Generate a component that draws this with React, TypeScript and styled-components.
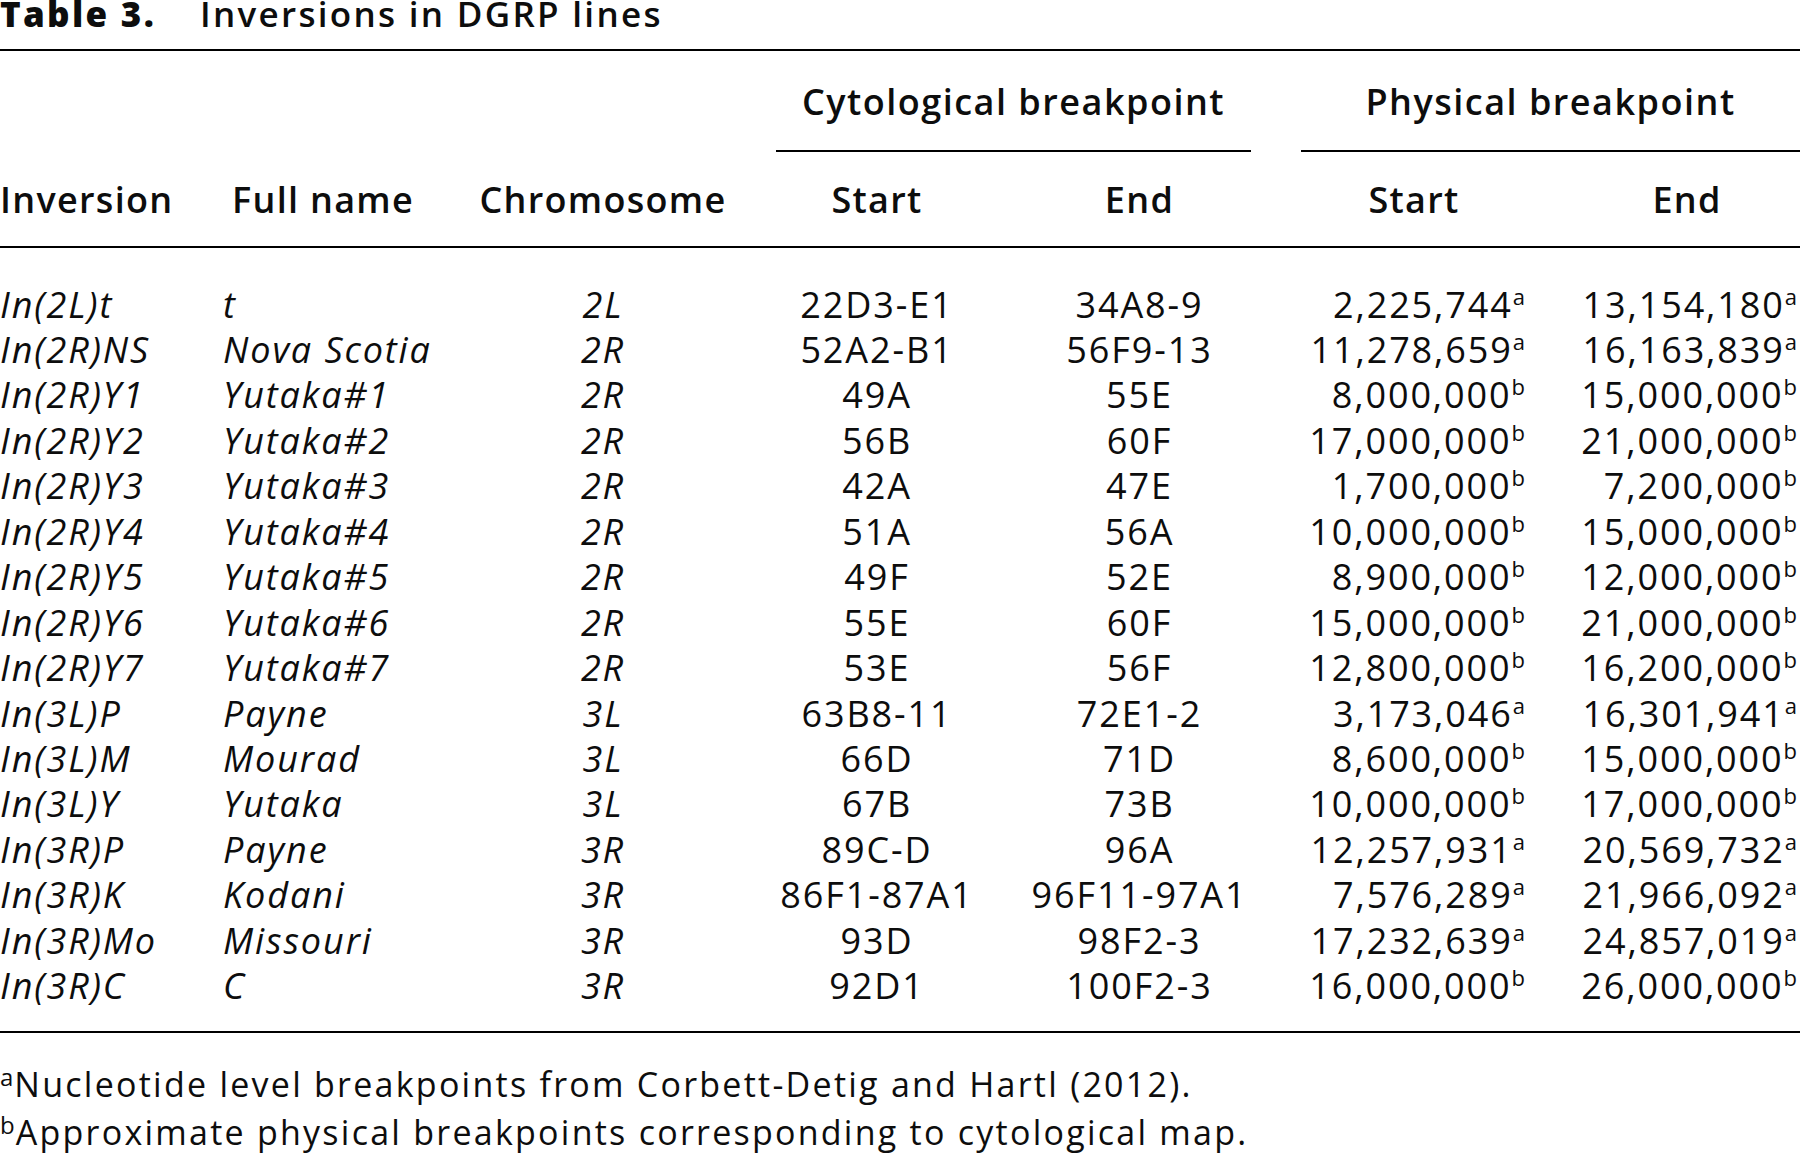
import React from "react";
import styled, { createGlobalStyle } from "styled-components";

const GlobalStyle = createGlobalStyle`
  html, body {
    margin: 0;
    padding: 0;
    background: #ffffff;
  }
  body {
    font-family: "Open Sans", "Liberation Sans", sans-serif;
    color: #0d0d0d;
    overflow: hidden;
  }
`;

const Page = styled.div`
  width: 1800px;
  height: 1156px;
  overflow: hidden;
`;

const Title = styled.h1`
  margin: 0;
  padding-top: 2px;
  height: 24px;
  line-height: 24px;
  font-size: 35px;
  font-weight: 600;
  letter-spacing: 2.3px;
  white-space: nowrap;
`;

const TitleLabel = styled.span`
  font-weight: 800;
  margin-right: 44px;
`;

const Table = styled.table`
  margin-top: 23px;
  width: 1800px;
  table-layout: fixed;
  border-collapse: separate;
  border-spacing: 0;
  border-top: 2px solid #000;
  border-bottom: 2px solid #000;
`;

const SpannerCell = styled.th`
  padding: 28px 0 0 0;
  font-size: 36px;
  font-weight: 600;
  letter-spacing: 1.5px;
  text-align: center;
  vertical-align: top;
`;

const SpannerText = styled.div<{ $right: number }>`
  line-height: 46px;
  padding-bottom: 25px;
  border-bottom: 2px solid #000;
  margin-left: 25px;
  margin-right: ${(p) => p.$right}px;
  white-space: nowrap;
`;

const HeadCell = styled.th<{ $align: string; $indent?: number }>`
  padding: 25px 0 23px ${(p) => p.$indent ?? 0}px;
  line-height: 46px;
  font-size: 36px;
  font-weight: 600;
  letter-spacing: 1.3px;
  text-align: ${(p) => p.$align};
  border-bottom: 2px solid #000;
  white-space: nowrap;
`;

const Cell = styled.td<{
  $align: string;
  $italic?: boolean;
  $padRight?: number;
  $first?: boolean;
  $last?: boolean;
}>`
  padding: ${(p) => (p.$first ? 33.5 : 0)}px ${(p) => p.$padRight ?? 0}px
    ${(p) => (p.$last ? 22 : 0)}px 0;
  line-height: 45.46px;
  font-size: 36px;
  font-weight: 400;
  letter-spacing: 1.9px;
  font-style: ${(p) => (p.$italic ? "italic" : "normal")};
  text-align: ${(p) => p.$align};
  white-space: nowrap;
  overflow: visible;
`;

const Sup = styled.sup`
  font-size: 22px;
  vertical-align: 13px;
  line-height: 0;
  letter-spacing: 0;
`;

const Notes = styled.div`
  margin-top: 27px;
  font-size: 34px;
  line-height: 48px;
  letter-spacing: 2.25px;
  white-space: nowrap;
`;

const NoteSup = styled.sup`
  font-size: 24px;
  vertical-align: 11px;
  line-height: 0;
  letter-spacing: 0;
  margin-right: 1px;
`;

type Row = [string, string, string, string, string, string, string, string, string];

const rows: Row[] = [
  ["In(2L)t", "t", "2L", "22D3-E1", "34A8-9", "2,225,744", "a", "13,154,180", "a"],
  ["In(2R)NS", "Nova Scotia", "2R", "52A2-B1", "56F9-13", "11,278,659", "a", "16,163,839", "a"],
  ["In(2R)Y1", "Yutaka#1", "2R", "49A", "55E", "8,000,000", "b", "15,000,000", "b"],
  ["In(2R)Y2", "Yutaka#2", "2R", "56B", "60F", "17,000,000", "b", "21,000,000", "b"],
  ["In(2R)Y3", "Yutaka#3", "2R", "42A", "47E", "1,700,000", "b", "7,200,000", "b"],
  ["In(2R)Y4", "Yutaka#4", "2R", "51A", "56A", "10,000,000", "b", "15,000,000", "b"],
  ["In(2R)Y5", "Yutaka#5", "2R", "49F", "52E", "8,900,000", "b", "12,000,000", "b"],
  ["In(2R)Y6", "Yutaka#6", "2R", "55E", "60F", "15,000,000", "b", "21,000,000", "b"],
  ["In(2R)Y7", "Yutaka#7", "2R", "53E", "56F", "12,800,000", "b", "16,200,000", "b"],
  ["In(3L)P", "Payne", "3L", "63B8-11", "72E1-2", "3,173,046", "a", "16,301,941", "a"],
  ["In(3L)M", "Mourad", "3L", "66D", "71D", "8,600,000", "b", "15,000,000", "b"],
  ["In(3L)Y", "Yutaka", "3L", "67B", "73B", "10,000,000", "b", "17,000,000", "b"],
  ["In(3R)P", "Payne", "3R", "89C-D", "96A", "12,257,931", "a", "20,569,732", "a"],
  ["In(3R)K", "Kodani", "3R", "86F1-87A1", "96F11-97A1", "7,576,289", "a", "21,966,092", "a"],
  ["In(3R)Mo", "Missouri", "3R", "93D", "98F2-3", "17,232,639", "a", "24,857,019", "a"],
  ["In(3R)C", "C", "3R", "92D1", "100F2-3", "16,000,000", "b", "26,000,000", "b"],
];

const colWidths = [223, 232, 296, 252, 273, 276, 248];

export default function App() {
  const n = rows.length;
  return (
    <Page>
      <GlobalStyle />
      <Title>
        <TitleLabel>Table 3.</TitleLabel>Inversions in DGRP lines
      </Title>
      <Table>
        <colgroup>
          {colWidths.map((w, i) => (
            <col key={i} style={{ width: w }} />
          ))}
        </colgroup>
        <thead>
          <tr>
            <SpannerCell colSpan={3} />
            <SpannerCell colSpan={2}>
              <SpannerText $right={25}>Cytological breakpoint</SpannerText>
            </SpannerCell>
            <SpannerCell colSpan={2}>
              <SpannerText $right={0}>Physical breakpoint</SpannerText>
            </SpannerCell>
          </tr>
          <tr>
            <HeadCell $align="left">Inversion</HeadCell>
            <HeadCell $align="left" $indent={9}>Full name</HeadCell>
            <HeadCell $align="center">Chromosome</HeadCell>
            <HeadCell $align="center">Start</HeadCell>
            <HeadCell $align="center">End</HeadCell>
            <HeadCell $align="center">Start</HeadCell>
            <HeadCell $align="center" $indent={22}>End</HeadCell>
          </tr>
        </thead>
        <tbody>
          {rows.map((r, i) => {
            const first = i === 0;
            const last = i === n - 1;
            return (
              <tr key={r[0]}>
                <Cell $align="left" $italic $first={first} $last={last}>{r[0]}</Cell>
                <Cell $align="left" $italic $first={first} $last={last}>{r[1]}</Cell>
                <Cell $align="center" $italic $first={first} $last={last}>{r[2]}</Cell>
                <Cell $align="center" $first={first} $last={last}>{r[3]}</Cell>
                <Cell $align="center" $first={first} $last={last}>{r[4]}</Cell>
                <Cell $align="right" $padRight={27} $first={first} $last={last}>
                  {r[5]}
                  <Sup>{r[6]}</Sup>
                </Cell>
                <Cell $align="right" $padRight={3} $first={first} $last={last}>
                  {r[7]}
                  <Sup>{r[8]}</Sup>
                </Cell>
              </tr>
            );
          })}
        </tbody>
      </Table>
      <Notes>
        <div>
          <NoteSup>a</NoteSup>Nucleotide level breakpoints from Corbett-Detig and Hartl (2012).
        </div>
        <div>
          <NoteSup>b</NoteSup>Approximate physical breakpoints corresponding to cytological map.
        </div>
      </Notes>
    </Page>
  );
}
